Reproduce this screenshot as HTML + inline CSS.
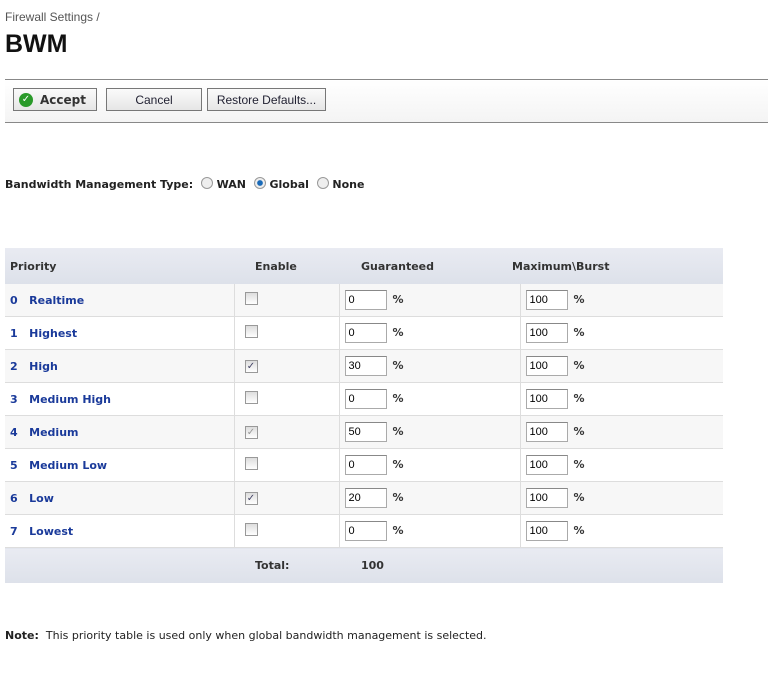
<!DOCTYPE html>
<html><head><style>
body{margin:0;width:768px;height:693px;background:#fff;font-family:"DejaVu Sans","Liberation Sans",sans-serif;position:relative;overflow:hidden}
.a{position:absolute}
.bc{left:5px;top:10px;font-size:12px;color:#555;font-family:"Liberation Sans",sans-serif}
.h1{left:5px;top:30px;font-size:25px;font-weight:bold;color:#111;font-family:"Liberation Sans",sans-serif}
.bar{left:5px;top:79px;width:763px;height:42px;border-top:1px solid #888;border-bottom:1px solid #888;background:linear-gradient(#fff,#f4f4f4)}
.btn{position:absolute;top:88px;height:23px;border:1px solid #777;background:linear-gradient(#fafafa,#e6e6e6);font-size:12px;color:#223;font-family:"Liberation Sans",sans-serif;text-align:center;line-height:23px;box-sizing:border-box}
.lbl{font-size:11px;font-weight:bold;color:#222}
.rad{display:inline-block;width:10px;height:10px;border-radius:50%;border:1px solid #999;background:#eee;vertical-align:-1px}
table{position:absolute;left:5px;top:248px;width:718px;border-collapse:collapse;font-size:11px;table-layout:fixed}
th{height:36px;background:linear-gradient(#e9ebf2,#dde1ea);text-align:left;color:#333;font-weight:bold;padding:0}
td{height:32px;border-bottom:1px solid #ddd;padding:0}
tbody tr:nth-child(odd) td{background:#f7f7f7}
td.c{border-right:1px solid #ddd}
.n{color:#1a3a9a;font-weight:bold}
.cb{display:inline-block;width:11px;height:11px;border:1px solid #999;background:linear-gradient(#ddd,#fff);margin-left:10px;font-size:10px;line-height:11px;text-align:center;color:#446}
.in{display:inline-block;width:42px;height:20px;border:1px solid #aaa;border-top-color:#888;background:#fff;margin-left:5px;font-size:11px;line-height:19px;padding-left:3px;box-sizing:border-box;vertical-align:middle;font-family:"Liberation Sans",sans-serif}
.pc{font-weight:bold;color:#333;margin-left:6px;font-size:11px}
tfoot td{height:35px;background:linear-gradient(#e9ebf2,#dde1ea)!important;border:0;font-weight:bold;color:#333}
</style></head><body>
<div class="a bc">Firewall Settings /</div>
<div class="a h1">BWM</div>
<div class="a bar"></div>
<div class="btn" style="left:13px;width:84px;font-weight:bold;font-family:'DejaVu Sans',sans-serif;text-align:left;padding-left:26px;color:#333"><span style="position:absolute;left:5px;top:4px;width:14px;height:14px;border-radius:50%;background:#2a9a2a;color:#fff;font-size:10px;line-height:14px;text-align:center">✓</span>Accept</div>
<div class="btn" style="left:106px;width:96px">Cancel</div>
<div class="btn" style="left:207px;width:119px">Restore Defaults...</div>
<div class="a lbl" style="left:5px;top:177px">Bandwidth Management Type: &nbsp;<span class="rad"></span> WAN &nbsp;<span class="rad" style="background:radial-gradient(#1a6ab8 35%,#eee 45%)"></span> Global &nbsp;<span class="rad"></span> None</div>
<table>
<colgroup><col style="width:229px"><col style="width:105px"><col style="width:181px"><col style="width:203px"></colgroup>
<thead><tr><th style="padding-left:5px">Priority</th><th style="padding-left:21px">Enable</th><th style="padding-left:22px">Guaranteed</th><th><span style="margin-left:-8px">Maximum\Burst</span></th></tr></thead>
<tbody>
<tr><td class="c" style="padding-left:5px"><span class="n">0 &nbsp;&nbsp;Realtime</span></td><td class="c"><span class="cb"></span></td><td class="c"><span class="in">0</span><span class="pc">%</span></td><td><span class="in">100</span><span class="pc">%</span></td></tr>
<tr><td class="c" style="padding-left:5px"><span class="n">1 &nbsp;&nbsp;Highest</span></td><td class="c"><span class="cb"></span></td><td class="c"><span class="in">0</span><span class="pc">%</span></td><td><span class="in">100</span><span class="pc">%</span></td></tr>
<tr><td class="c" style="padding-left:5px"><span class="n">2 &nbsp;&nbsp;High</span></td><td class="c"><span class="cb">✓</span></td><td class="c"><span class="in">30</span><span class="pc">%</span></td><td><span class="in">100</span><span class="pc">%</span></td></tr>
<tr><td class="c" style="padding-left:5px"><span class="n">3 &nbsp;&nbsp;Medium High</span></td><td class="c"><span class="cb"></span></td><td class="c"><span class="in">0</span><span class="pc">%</span></td><td><span class="in">100</span><span class="pc">%</span></td></tr>
<tr><td class="c" style="padding-left:5px"><span class="n">4 &nbsp;&nbsp;Medium</span></td><td class="c"><span class="cb" style="color:#999">✓</span></td><td class="c"><span class="in">50</span><span class="pc">%</span></td><td><span class="in">100</span><span class="pc">%</span></td></tr>
<tr><td class="c" style="padding-left:5px"><span class="n">5 &nbsp;&nbsp;Medium Low</span></td><td class="c"><span class="cb"></span></td><td class="c"><span class="in">0</span><span class="pc">%</span></td><td><span class="in">100</span><span class="pc">%</span></td></tr>
<tr><td class="c" style="padding-left:5px"><span class="n">6 &nbsp;&nbsp;Low</span></td><td class="c"><span class="cb">✓</span></td><td class="c"><span class="in">20</span><span class="pc">%</span></td><td><span class="in">100</span><span class="pc">%</span></td></tr>
<tr><td class="c" style="padding-left:5px"><span class="n">7 &nbsp;&nbsp;Lowest</span></td><td class="c"><span class="cb"></span></td><td class="c"><span class="in">0</span><span class="pc">%</span></td><td><span class="in">100</span><span class="pc">%</span></td></tr>
</tbody>
<tfoot><tr><td></td><td style="padding-left:21px">Total:</td><td style="padding-left:22px">100</td><td></td></tr></tfoot>
</table>
<div class="a" style="left:5px;top:629px;font-size:11px;color:#222"><b>Note:</b>&nbsp; This priority table is used only when global bandwidth management is selected.</div>
</body></html>
